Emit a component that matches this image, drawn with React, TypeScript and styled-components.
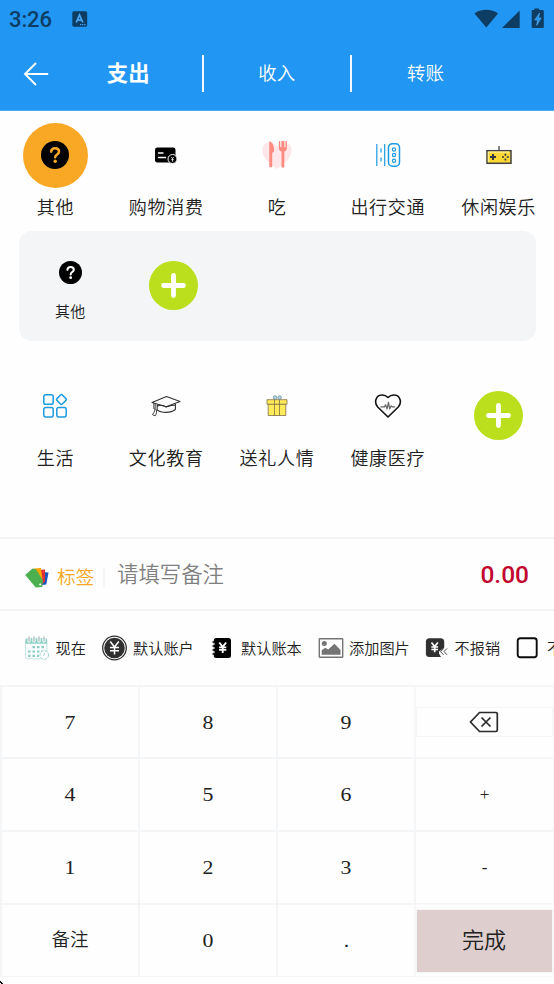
import React from 'react';
import styled, { createGlobalStyle } from 'styled-components';

const LINE = '#f4f5f7';

const GlobalStyle = createGlobalStyle`
  * { box-sizing: border-box; }
  body {
    margin: 0;
    background: #fefefe;
    color: #212121;
    font-family: Roboto, "Noto Sans CJK SC", sans-serif;
    font-weight: 350;
    overflow: hidden;
  }
`;

const Screen = styled.div`
  width: 554px;
  height: 984px;
  display: flex;
  flex-direction: column;
  overflow: hidden;
  background: #fefefe;
`;

const Header = styled.header`
  height: 111px;
  flex: none;
  background: #2196f3;
  border-bottom: 1px solid #4aa9f5;
`;

const StatusBar = styled.div`
  height: 37px;
  display: flex;
  align-items: center;
  padding: 1px 9px 0 9px;
  color: #0d3d63;
`;

const Clock = styled.span`
  width: 63px;
  font-size: 22px;
  font-weight: 500;
  letter-spacing: -0.1px;
  line-height: 35px;
`;

const StatusIcons = styled.div`
  margin-left: auto;
  display: flex;
`;

const TabBar = styled.nav`
  height: 73px;
  display: flex;
  align-items: center;
`;

const BackButton = styled.button`
  width: 55px;
  height: 37px;
  padding: 0 0 0 23px;
  border: 0;
  background: none;
  display: flex;
  align-items: center;
`;

const Tab = styled.div<{ $active?: boolean; $last?: boolean }>`
  width: ${p => (p.$last ? 147 : 148.5)}px;
  height: 37px;
  padding-bottom: 4px;
  display: flex;
  align-items: center;
  justify-content: center;
  color: #fff;
  font-size: ${p => (p.$active ? 21.4 : 18.4)}px;
  font-weight: ${p => (p.$active ? 700 : 350)};
  border-right: ${p => (p.$last ? '0' : '2px solid #f2f8fd')};
`;

const CategoryRow = styled.section<{ $height: number }>`
  height: ${p => p.$height}px;
  flex: none;
  display: grid;
  grid-template-columns: repeat(5, 1fr);
  justify-items: center;
`;

const Category = styled.div`
  display: flex;
  flex-direction: column;
  align-items: center;
  padding-top: 12px;
`;

const CategoryIcon = styled.div<{ $active?: boolean }>`
  width: 65px;
  height: 65px;
  padding-bottom: 1px;
  border-radius: 50%;
  display: flex;
  align-items: center;
  justify-content: center;
  background: ${p => (p.$active ? '#f9a825' : 'transparent')};
`;

const CategoryLabel = styled.span`
  margin-top: 6px;
  font-size: 18px;
  line-height: 28px;
  letter-spacing: 0.7px;
  white-space: nowrap;
`;

const AddButton = styled.button<{ $top: number }>`
  width: 49px;
  height: 49px;
  margin: ${p => p.$top}px 0 0;
  padding: 0;
  border: 0;
  border-radius: 50%;
  background: #bbdf1d;
  display: flex;
  align-items: center;
  justify-content: center;
`;

const SubPanel = styled.section`
  height: 110px;
  flex: none;
  margin: 0 18px 21px 18.5px;
  border-radius: 13px;
  background: #f4f5f7;
  display: grid;
  grid-template-columns: repeat(5, 1fr);
  justify-items: center;
`;

const SubCategory = styled.div`
  display: flex;
  flex-direction: column;
  align-items: center;
  padding-top: 30px;
  font-size: 15px;
  line-height: 22px;
  letter-spacing: 0.3px;
`;

const SubLabel = styled.span`
  margin-top: 17px;
`;

const NoteRow = styled.section`
  height: 74px;
  flex: none;
  display: flex;
  align-items: center;
  border-top: 2px solid ${LINE};
  border-bottom: 2px solid ${LINE};
  padding: 0 25px 0 24px;
`;

const TagButton = styled.div`
  display: flex;
  align-items: center;
  width: 81px;
  height: 20px;
  margin-top: 6px;
  gap: 7px;
  border-right: 2px solid ${LINE};
  color: #f9a825;
  font-size: 18.6px;
  white-space: nowrap;
`;

const TagLabel = styled.span`
  padding-bottom: 3px;
`;

const NoteField = styled.div`
  padding-top: 1px;
  margin-left: 12px;
  color: #808080;
  font-size: 21.4px;
  line-height: 30px;
`;

const Amount = styled.div`
  margin-left: auto;
  padding-top: 2px;
  color: #c2062e;
  font-size: 24.5px;
  font-weight: 500;
  line-height: 30px;
`;

const OptionRow = styled.section`
  height: 74px;
  flex: none;
  display: flex;
  align-items: center;
  padding-left: 24px;
  overflow: hidden;
`;

const Option = styled.div<{ $width: number; $gap: number }>`
  width: ${p => p.$width}px;
  flex: none;
  display: flex;
  align-items: center;
  gap: ${p => p.$gap}px;
  font-size: 15.2px;
  line-height: 24px;
  white-space: nowrap;
`;

const OptionLabel = styled.span`
  padding-top: 2px;
`;

const Keypad = styled.section`
  height: 292px;
  flex: none;
  display: grid;
  grid-template-columns: 138px 138px 138px 139px;
  grid-template-rows: 72px repeat(3, 73px);
  border-left: 1px solid ${LINE};
  border-top: 1px solid ${LINE};
`;

const Key = styled.button<{ $cjk?: boolean; $sign?: boolean }>`
  padding: ${p => (p.$cjk ? '0 0 5px' : '1px 0 0')};
  background: transparent;
  border: 1px solid ${LINE};
  margin: 0;
  display: flex;
  align-items: center;
  justify-content: center;
  color: #212121;
  font-family: ${p =>
    p.$cjk ? '"Noto Sans CJK SC", sans-serif' : '"Liberation Serif", serif'};
  font-size: ${p => (p.$cjk ? 18.5 : p.$sign ? 17 : 19.5)}px;
  font-weight: ${p => (p.$cjk ? 350 : 400)};
`;

const Digit = styled.span`
  display: block;
  transform: scaleX(1.12);
`;

const KeySlot = styled.div`
  border: 1px solid #f8f8fa;
  display: flex;
  flex-direction: column;
  justify-content: center;
`;

const DeleteKey = styled.button`
  height: 30px;
  padding: 0 2px 0 0;
  background: transparent;
  border: 1px solid ${LINE};
  display: flex;
  align-items: center;
  justify-content: center;
`;

const DoneKey = styled.button`
  height: 64px;
  padding: 0 1px 5px 0;
  border: 1px solid ${LINE};
  background: #decece;
  color: #212121;
  font-family: "Noto Sans CJK SC", sans-serif;
  font-size: 22px;
  font-weight: 350;
`;

const CornerMark = styled.div`
  height: 4px;
  margin-top: auto;
  line-height: 0;
`;

const QuestionIcon = ({ size, hole }: { size: number; hole: string }) => (
  <svg width={size} height={size} viewBox="0 0 28 28">
    <circle cx="14" cy="14" r="14" fill="#000" />
    <path d="M10.200 10.700c.2-2.300 1.700-3.500 3.900-3.500 2.300 0 3.900 1.300 3.900 3.300 0 3-3.800 2.900-3.800 5.800" fill="none" stroke={hole} strokeWidth="2.500" strokeLinecap="round" />
    <circle cx="14.200" cy="20.300" r="1.700" fill={hole} />
  </svg>
);

const PlusIcon = () => (
  <svg width="25" height="25" viewBox="0 0 25 25">
    <path d="M12.500 2.500v20M2.500 12.500h20" stroke="#fff" strokeWidth="4.800" strokeLinecap="round" />
  </svg>
);

const CardIcon = () => (
  <svg width="24" height="20" viewBox="0 0 24 20">
    <rect x="1" y="2.500" width="20.500" height="15" rx="2.200" fill="#000" />
    <path d="M4.500 8h4.500M4.500 12.500h7" stroke="#fff" strokeWidth="1.400" strokeLinecap="round" />
    <circle cx="18.500" cy="14" r="4.500" fill="#000" stroke="#fefefe" strokeWidth="1" />
    <path d="M17.300 12l1.200 1.600 1.200-1.600M18.500 13.600v3M17.200 14.700h2.600" stroke="#fff" strokeWidth=".8" fill="none" />
  </svg>
);

const FoodIcon = () => (
  <svg width="30" height="32" viewBox="0 0 30 32">
    <path d="M15 30C6 24 .5 18 .5 12a7 7 0 0 1 14.500-3 7 7 0 0 1 14.500 3c0 6-5.500 12-14.500 18z" fill="#ffe7e9" />
    <path d="M7.300 2c3.400 1.600 5 5 4.700 10.500L10.200 14v14.200H7.300z" fill="#ff8a80" />
    <path d="M16.900 2v7c0 2 .9 3 2.600 3.400v16h2.800v-16c1.700-.4 2.600-1.400 2.600-3.400V2h-1.300v6.200h-1.300V2h-2.800v6.200h-1.300V2z" fill="#ff8a80" />
  </svg>
);

const TransitIcon = () => (
  <svg width="26" height="26" viewBox="0 0 26 26" fill="none" stroke="#1c9be0" strokeWidth="1.200">
    <path d="M1.800 2v22M6 6.500v4M6 15.500v4M9.700 2v22" />
    <rect x="13.500" y="1.700" width="11" height="22.500" rx="3.800" strokeWidth="1.500" />
    <circle cx="19" cy="7.500" r="1.600" />
    <circle cx="19" cy="13" r="1.600" />
    <circle cx="19" cy="18.700" r="1.600" />
  </svg>
);

const GamepadIcon = () => (
  <svg width="26" height="26" viewBox="0 0 26 26">
    <path d="M13 4v5" stroke="#424242" strokeWidth="1.300" />
    <rect x="1" y="8.700" width="24" height="12.600" fill="#fdd835" stroke="#424242" strokeWidth="1.500" />
    <path d="M2.300 20V10h21" stroke="#fff3b0" fill="none" />
    <path d="M4 15h6M7 12v6" stroke="#37373f" strokeWidth="2" />
    <path d="M16 15h2M20.800 15h2M19.400 11.700v2M19.400 16.500v2" stroke="#37373f" strokeWidth="1.700" />
  </svg>
);

const LifeIcon = () => (
  <svg width="26" height="26" viewBox="0 0 26 26" fill="none" stroke="#1c9be0" strokeWidth="1.500">
    <rect x="1.800" y="1.800" width="9.400" height="9.400" rx="1.800" />
    <rect x="1.800" y="14.500" width="9.400" height="9.400" rx="1.800" />
    <rect x="14.800" y="14.500" width="9.400" height="9.400" rx="1.800" />
    <path d="M18.500 2l-3.600 3.600q-.9.900 0 1.800L18.500 11q.9.900 1.800 0l3.600-3.600q.9-.9 0-1.800L20.300 2q-.9-.9-1.800 0z" />
  </svg>
);

const GraduationIcon = () => (
  <svg width="30" height="24" viewBox="0 0 30 24" fill="none" stroke="#303030" strokeWidth="1.100" strokeLinejoin="round">
    <path d="M1 8.500L15.500 2.500 29 7.500 15.200 12.700z" />
    <path d="M6.200 10.800v5c4 3.400 13.500 3.500 18.200-.3V9.500M6.200 12.200c3-1.600 6-1 9 .8 3-.9 6-2.200 9.200-1.700" />
    <path d="M4.200 9.900v5.500c-.5 1.900-1.600 3.900-2.700 5.300l2.800 1.100c1.300-2 1.400-4.300 1-6.400M2.800 9.300v5.500l1.400.6" strokeWidth=".9" />
  </svg>
);

const GiftIcon = () => (
  <svg width="24" height="24" viewBox="0 0 24 24" fill="#ffeb5a" stroke="#806f44" strokeWidth=".8">
    <path d="M3.200 10h17.600v11.500H3.200z" />
    <path d="M2 5.700h20v4.500H2z" />
    <path d="M9.500 5.700v15.800M14.500 5.700v15.800" />
    <circle cx="10" cy="3.500" r="1.700" fill="#bcdfe9" stroke="#5e8293" />
    <circle cx="14.600" cy="3.500" r="1.700" fill="#bcdfe9" stroke="#5e8293" />
  </svg>
);

const HealthIcon = () => (
  <svg width="28" height="26" viewBox="0 0 28 26" fill="none" strokeLinejoin="round">
    <path d="M14 24L3.700 14C-.2 9.500 1.700 2.300 7.700 2 10.500 1.800 12.500 3 14 4.500 15.500 3 17.500 1.800 20.300 2 26.300 2.300 28.200 9.500 24.300 14z" stroke="#111" strokeWidth="1.600" />
    <path d="M6.500 13.800h4l1-2 1.500 4 1.500-6.500 1.200 6.500 1.500-3 1 1h3" stroke="#626262" strokeWidth="1.200" />
  </svg>
);

const TagIcon = () => (
  <svg width="26" height="22" viewBox="0 0 26 22">
    <path d="M18 6l6.500.5-2.200 12-8 1z" fill="#1557c0" />
    <path d="M14 4l7-.5v12l-5 5z" fill="#db3236" />
    <path d="M10 2.500L17 2l1.500 12-3 6z" fill="#ffa400" />
    <path d="M1.200 9L8.500 2.500 12 3.200l7 11.300-.7 6.500-6.500.5z" fill="#4caf50" />
    <circle cx="16.200" cy="18.500" r="1" fill="#fff" />
  </svg>
);

const CalendarIcon = () => (
  <svg width="26" height="26" viewBox="0 0 26 26">
    <rect x="1.500" y="4" width="21.500" height="19.800" rx="1.500" fill="#fafefe" stroke="#c4e5e1" strokeWidth="1" />
    <path d="M1.500 8.800V5q0-2 2-2H21q2 0 2 2v3.800z" fill="#8fd0c8" />
    <path d="M5 2v4M10 2v4M15 2v4M20 2v4" stroke="#fff" strokeWidth="3.200" strokeLinecap="round" />
    <path d="M5 2v4M10 2v4M15 2v4M20 2v4" stroke="#b5c9c8" strokeWidth="1.600" strokeLinecap="round" />
    <path d="M8.500 12.200h12M4 16.500h15M4 20.800h11" stroke="#8accc4" strokeWidth="2.200" strokeDasharray="2.500 2" />
    <circle cx="20.300" cy="20" r="4.300" fill="#fff" stroke="#a5d8d2" strokeWidth="1" strokeDasharray="3 1" />
    <path d="M20.300 17.500V20l-1.500 1" stroke="#a5d8d2" fill="none" />
  </svg>
);

const YuanMark = ({ x, y, s, w }: { x: number; y: number; s: number; w: number }) => (
  <path
    transform={`translate(${x} ${y}) scale(${s})`}
    d="M-4.300-6L0-.5 4.300-6M0-.5V7M-4.500 0h9M-4.500 3.300h9"
    fill="none"
    stroke="#fff"
    strokeWidth={w}
  />
);

const AccountIcon = () => (
  <svg width="26" height="26" viewBox="0 0 26 26">
    <circle cx="12.500" cy="13" r="11.800" fill="#fff" stroke="#303030" strokeWidth="1.300" />
    <circle cx="12.500" cy="13" r="10.300" fill="#303030" />
    <YuanMark x={12.5} y={12.5} s={1} w={1.5} />
  </svg>
);

const BookIcon = () => (
  <svg width="20" height="22" viewBox="0 0 20 22">
    <rect x="2.800" y="1" width="17.200" height="20" rx="2.500" fill="#000" />
    <path d="M1.500 5H4M1.500 9H4M1.500 13H4M1.500 17H4" stroke="#000" strokeWidth="1.600" />
    <path d="M3 7h1M3 11h1M3 15h1" stroke="#fff" />
    <YuanMark x={11.7} y={10.3} s={0.8} w={2.3} />
  </svg>
);

const PictureIcon = () => (
  <svg width="26" height="22" viewBox="0 0 26 22">
    <rect x="1.300" y="1.800" width="23.400" height="18.400" rx=".5" fill="#fff" stroke="#757575" strokeWidth="1.400" />
    <circle cx="6.300" cy="6.600" r="2.500" fill="#757575" />
    <path d="M3.700 17.800v-4.600l3.500-2.500 3 1.800 6.300-5.800 6 6.300v4.800z" fill="#757575" />
  </svg>
);

const ReimburseIcon = () => (
  <svg width="24" height="22" viewBox="0 0 24 22">
    <rect x=".9" y="1.300" width="18.300" height="18.700" rx="3.500" fill="#303030" />
    <YuanMark x={9.7} y={10} s={0.75} w={2.2} />
    <path d="M19.500 10.500L14 14.500v6h9v-9z" fill="#fefefe" />
    <path d="M18.800 11.500L15.500 14.500l3 3.300M22 11.500l-3 3 3 3.300" fill="none" stroke="#454545" strokeWidth="1" />
    <path d="M14 16.500V20h2z" fill="#303030" />
  </svg>
);

const CheckboxIcon = () => (
  <svg width="22" height="22" viewBox="0 0 22 22">
    <rect x="1.700" y="1.200" width="19" height="19" rx="2.500" fill="none" stroke="#0b0b0b" strokeWidth="1.900" />
  </svg>
);

const categories = [
  { label: '其他', icon: <QuestionIcon size={28} hole="#f9a825" />, active: true },
  { label: '购物消费', icon: <CardIcon /> },
  { label: '吃', icon: <FoodIcon /> },
  { label: '出行交通', icon: <TransitIcon /> },
  { label: '休闲娱乐', icon: <GamepadIcon /> },
];

const moreCategories = [
  { label: '生活', icon: <LifeIcon /> },
  { label: '文化教育', icon: <GraduationIcon /> },
  { label: '送礼人情', icon: <GiftIcon /> },
  { label: '健康医疗', icon: <HealthIcon /> },
];

const options = [
  { label: '现在', icon: <CalendarIcon />, width: 78, gap: 5.5 },
  { label: '默认账户', icon: <AccountIcon />, width: 109, gap: 5 },
  { label: '默认账本', icon: <BookIcon />, width: 107, gap: 10 },
  { label: '添加图片', icon: <PictureIcon />, width: 107, gap: 5 },
  { label: '不报销', icon: <ReimburseIcon />, width: 91, gap: 5.5 },
  { label: '不计入', icon: <CheckboxIcon />, width: 90, gap: 9 },
];

const DigitKey = ({ children }: { children: string }) => (
  <Key><Digit>{children}</Digit></Key>
);

export default function App() {
  return (
    <>
      <GlobalStyle />
      <Screen>
        <Header>
          <StatusBar>
            <Clock>3:26</Clock>
            <svg width="16" height="16" viewBox="0 0 16 16">
              <rect x=".3" y=".3" width="14.900" height="15.400" rx="1.700" fill="#0d3d63" />
              <path d="M4.200 11.500L7.500 3.800l3.300 7.700M5.500 9.200h4" fill="none" stroke="#48a7f3" strokeWidth="1.700" />
              <path d="M8 13.700h6" stroke="#48a7f3" strokeWidth="1.200" strokeDasharray="1.300 .8" />
            </svg>
            <StatusIcons>
              <svg width="72" height="22" viewBox="0 0 72 22" fill="#0d3d63">
                <path d="M1.500 5.500C7.500.5 19 .5 25 5.500L13.300 19.500z" />
                <path d="M46.700 2.500V20H29z" />
                <path d="M61.300.5h4.900V2h3.500q1.100 0 1.100 1.100v15.800q0 1.100-1.100 1.100h-9.900q-1.100 0-1.100-1.100V3.100Q58.700 2 59.800 2h1.500z" />
                <path d="M66.500 5l-4.800 7h2.700l-.7 5.500 4.500-7.500h-2.500z" fill="#2196f3" stroke="#65b7f7" strokeWidth=".5" />
              </svg>
            </StatusIcons>
          </StatusBar>
          <TabBar>
            <BackButton aria-label="返回">
              <svg width="27" height="26" viewBox="0 0 27 26" fill="none" stroke="#fff" strokeWidth="1.900">
                <path d="M25.200 13H2M13 2L2 13l11 11" />
              </svg>
            </BackButton>
            <Tab $active>支出</Tab>
            <Tab>收入</Tab>
            <Tab $last>转账</Tab>
          </TabBar>
        </Header>

        <CategoryRow $height={120}>
          {categories.map(c => (
            <Category key={c.label}>
              <CategoryIcon $active={c.active}>{c.icon}</CategoryIcon>
              <CategoryLabel>{c.label}</CategoryLabel>
            </Category>
          ))}
        </CategoryRow>

        <SubPanel>
          <SubCategory>
            <QuestionIcon size={23} hole="#fff" />
            <SubLabel>其他</SubLabel>
          </SubCategory>
          <AddButton $top={30.4} aria-label="添加子分类"><PlusIcon /></AddButton>
        </SubPanel>

        <CategoryRow $height={175}>
          {moreCategories.map(c => (
            <Category key={c.label}>
              <CategoryIcon>{c.icon}</CategoryIcon>
              <CategoryLabel>{c.label}</CategoryLabel>
            </Category>
          ))}
          <AddButton $top={28.5} aria-label="添加分类"><PlusIcon /></AddButton>
        </CategoryRow>

        <NoteRow>
          <TagButton><TagIcon /><TagLabel>标签</TagLabel></TagButton>
          <NoteField>请填写备注</NoteField>
          <Amount>0.00</Amount>
        </NoteRow>

        <OptionRow>
          {options.map(o => (
            <Option key={o.label} $width={o.width} $gap={o.gap}>
              {o.icon}
              <OptionLabel>{o.label}</OptionLabel>
            </Option>
          ))}
        </OptionRow>

        <Keypad>
          <DigitKey>7</DigitKey>
          <DigitKey>8</DigitKey>
          <DigitKey>9</DigitKey>
          <KeySlot>
            <DeleteKey aria-label="删除">
              <svg width="30" height="22" viewBox="0 0 30 22" fill="none" stroke="#292929" strokeWidth="1.700">
                <path d="M10.500 1.500H27q1.300 0 1.300 1.300v16.400q0 1.300-1.300 1.300H10.500L1.500 11zM12.500 6.500l9 9M21.500 6.500l-9 9" />
              </svg>
            </DeleteKey>
          </KeySlot>
          <DigitKey>4</DigitKey>
          <DigitKey>5</DigitKey>
          <DigitKey>6</DigitKey>
          <Key $sign>+</Key>
          <DigitKey>1</DigitKey>
          <DigitKey>2</DigitKey>
          <DigitKey>3</DigitKey>
          <Key $sign>-</Key>
          <Key $cjk>备注</Key>
          <DigitKey>0</DigitKey>
          <DigitKey>.</DigitKey>
          <KeySlot>
            <DoneKey>完成</DoneKey>
          </KeySlot>
        </Keypad>
        <CornerMark>
          <svg width="4" height="4" viewBox="0 0 4 4">
            <path d="M0 0h1v1h1v1h1v2H2V3H1V2H0z" fill="#111" />
          </svg>
        </CornerMark>
      </Screen>
    </>
  );
}
